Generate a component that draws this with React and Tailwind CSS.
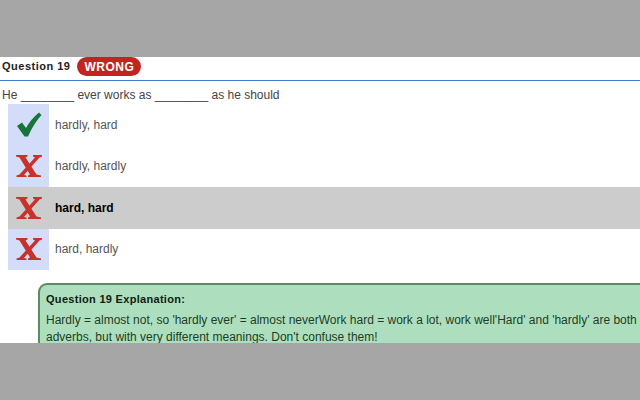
import React from "react";

const CheckIcon = () => (
  <svg width="26" height="26" viewBox="0 0 26 26">
    <path d="M1 14 L6 10.5 L10 16 Q15 7 23 0.5 L25.5 3 Q18 11 12 24.5 L8.5 24.5 Z" fill="#17753a" />
  </svg>
);

const CrossIcon = () => (
  <svg width="30" height="24" viewBox="0 0 30 24">
    {/* thin stroke */}
    <path d="M19 1 L28 1 L28 2.5 L25.5 3.5 L10 21 L12.5 21.5 L12.5 23 L2.5 23 L2.5 21.5 L5.5 20.5 L21 3.5 L19 2.5 Z" fill="#c8322a" />
    {/* thick stroke */}
    <path d="M2 1 L13.5 1 L13.5 2.5 L11.5 3.5 L22.5 20.5 L27 21.5 L27 23 L14 23 L14 21.5 L16 20.5 L5.5 3.5 L2 2.5 Z" fill="#c8322a" />
  </svg>
);

const options = [
  { text: "hardly, hard", correct: true, picked: false },
  { text: "hardly, hardly", correct: false, picked: false },
  { text: "hard, hard", correct: false, picked: true },
  { text: "hard, hardly", correct: false, picked: false },
];

export default function App() {
  return (
    <div className="w-[640px] h-[400px] flex flex-col bg-[#a6a6a6] font-['Liberation_Sans',Arial,sans-serif]">
      <div className="h-[57px] shrink-0" />
      <div className="h-[286px] shrink-0 bg-white overflow-hidden">
        <div className="h-[24px] flex items-center border-b border-[#3d7bd6] pl-[2px]">
          <span className="-mt-[4px] text-[11px] font-bold text-[#222] tracking-[0.5px]">Question 19</span>
          <span className="ml-[7px] -mt-[4px] h-[19px] px-[7px] rounded-full bg-[#c0261f] text-white text-[12px] font-bold flex items-center tracking-[0.5px]">
            WRONG
          </span>
        </div>
        <div className="h-[23px] flex items-center pl-[2px] pt-[4px] text-[12px] text-[#444]">
          He ________ ever works as ________ as he should
        </div>
        <div className="ml-[8px]">
          {options.map((o) => (
            <div key={o.text} className={"h-[41.5px] flex items-center " + (o.picked ? "bg-[#cccccc]" : "")}>
              <div className={"w-[41px] h-full flex items-center justify-center " + (o.picked ? "" : "bg-[#d3dcf8]")}>
                {o.correct ? <CheckIcon /> : <CrossIcon />}
              </div>
              <span className={"ml-[6px] text-[12px] " + (o.picked ? "font-bold text-black" : "text-[#555]")}>
                {o.text}
              </span>
            </div>
          ))}
        </div>
        <div className="ml-[38px] mt-[13px] w-[620px] rounded-[9px] border-2 border-[#5e8a62] bg-[#addfbf] px-[6px] pt-[6px] pb-[8px]">
          <div className="text-[11px] font-bold text-[#102010] tracking-[0.3px]">Question 19 Explanation:</div>
          <div className="mt-[4px] text-[12px] leading-[17px] text-[#1d3d24] w-[596px]">
            Hardly = almost not, so 'hardly ever' = almost neverWork hard = work a lot, work well'Hard' and 'hardly' are both adverbs, but with very different meanings. Don't confuse them!
          </div>
        </div>
      </div>
    </div>
  );
}
